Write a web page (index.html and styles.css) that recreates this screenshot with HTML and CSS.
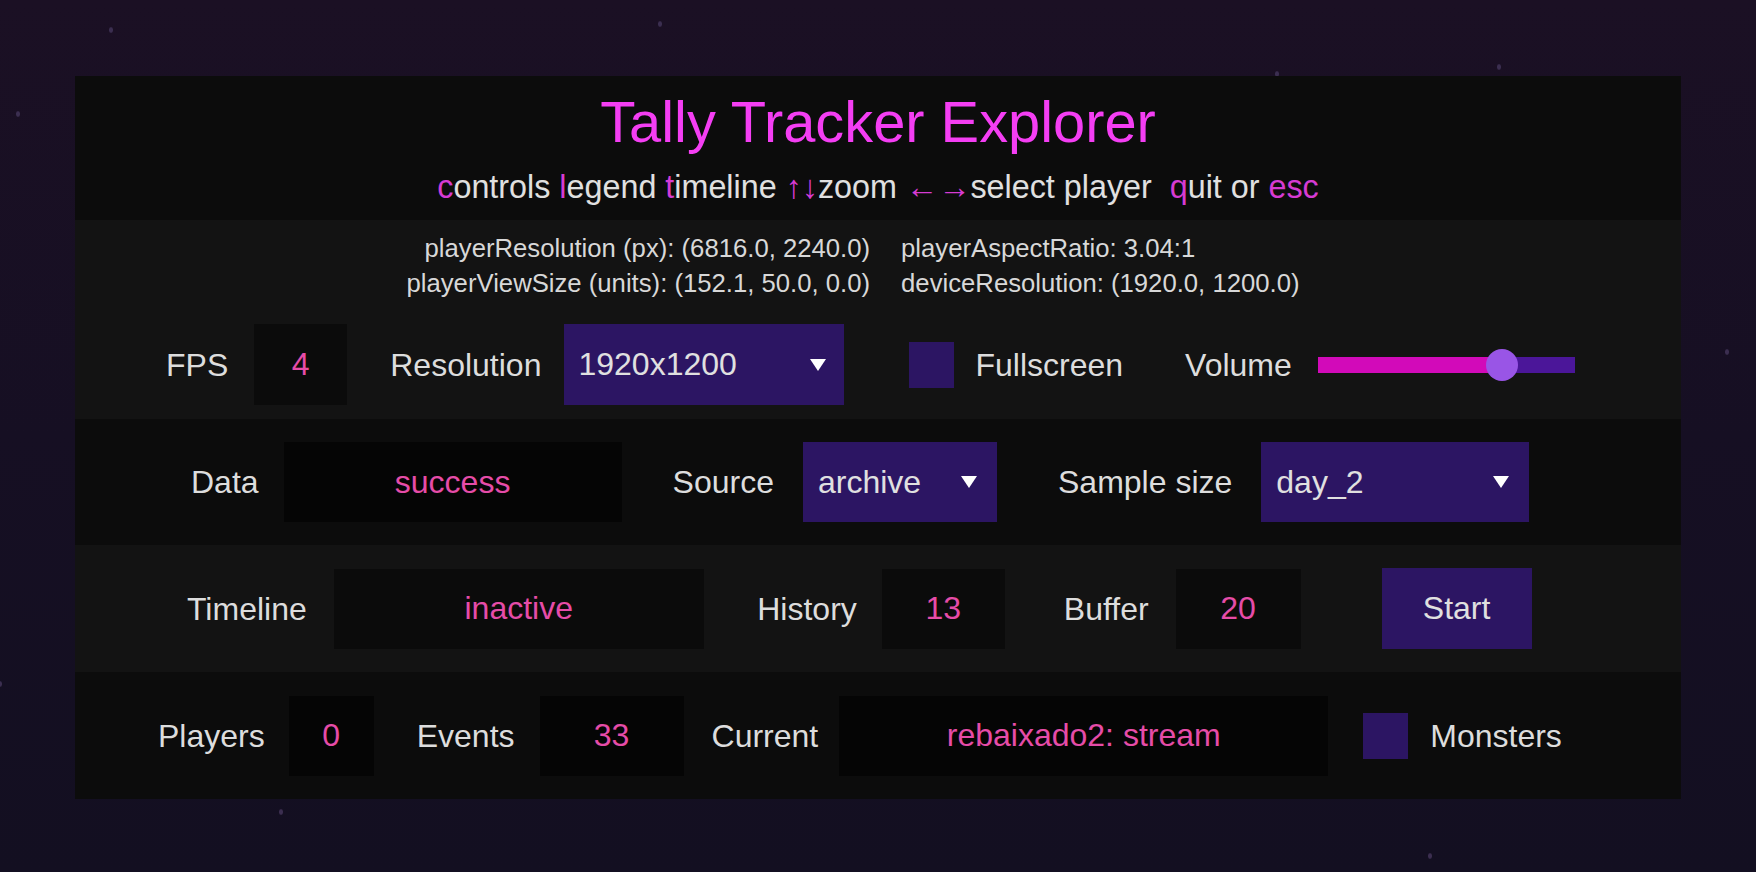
FILE: index.html
```html
<!DOCTYPE html>
<html lang="en">
<head>
<meta charset="utf-8">
<title>Tally Tracker Explorer</title>
<link rel="stylesheet" href="styles.css">
</head>
<body>
<main class="panel">
  <header class="head">
    <h1 class="title">Tally Tracker Explorer</h1>
    <p class="keys"><span class="k">c</span>ontrols <span class="k">l</span>egend <span class="k">t</span>imeline <span class="k">↑↓</span>zoom <span class="k">←→</span>select player&nbsp; <span class="k">q</span>uit or <span class="k">esc</span></p>
  </header>

  <section class="info">
    <div class="info-l">playerResolution (px): (6816.0, 2240.0)</div>
    <div class="info-r">playerAspectRatio: 3.04:1</div>
    <div class="info-l">playerViewSize (units): (152.1, 50.0, 0.0)</div>
    <div class="info-r">deviceResolution: (1920.0, 1200.0)</div>
  </section>

  <div class="row light row-fps">
    <span class="label">FPS</span>
    <div class="val fps-val">4</div>
    <span class="label res-label">Resolution</span>
    <div class="select res-select"><span>1920x1200</span><i class="arrow"></i></div>
    <div class="check full-check"></div>
    <span class="label full-label">Fullscreen</span>
    <span class="label vol-label">Volume</span>
    <div class="slider">
      <div class="fill" style="width:184px"></div>
      <div class="thumb" style="left:168px"></div>
    </div>
  </div>

  <div class="row dark row-data">
    <span class="label">Data</span>
    <div class="val data-val">success</div>
    <span class="label src-label">Source</span>
    <div class="select src-select"><span>archive</span><i class="arrow"></i></div>
    <span class="label sample-label">Sample size</span>
    <div class="select sample-select"><span>day_2</span><i class="arrow"></i></div>
  </div>

  <div class="row light row-time">
    <span class="label">Timeline</span>
    <div class="val time-val">inactive</div>
    <span class="label hist-label">History</span>
    <div class="val hist-val">13</div>
    <span class="label buf-label">Buffer</span>
    <div class="val buf-val">20</div>
    <button class="start">Start</button>
  </div>

  <div class="row dark row-play">
    <span class="label">Players</span>
    <div class="val play-val">0</div>
    <span class="label ev-label">Events</span>
    <div class="val ev-val">33</div>
    <span class="label cur-label">Current</span>
    <div class="val cur-val">rebaixado2: stream</div>
    <div class="check mon-check"></div>
    <span class="label mon-label">Monsters</span>
  </div>
</main>
</body>
</html>
```
FILE: styles.css
```css
html {
  background: #160f22;
}

body {
  margin: 0;
  height: 872px;
  box-sizing: border-box;
  padding: 76px 75px 0;
  font-family: "Liberation Sans", Arial, sans-serif;
  color: #dddddd;
  background:
    radial-gradient(2.5px 3.5px at 111px 30px, #3b2e50 60%, transparent 100%),
    radial-gradient(2.5px 3.5px at 660px 24px, #3b2e50 60%, transparent 100%),
    radial-gradient(2.5px 3.5px at 18px 114px, #3b2e50 60%, transparent 100%),
    radial-gradient(2.5px 3.5px at 1277px 74px, #3b2e50 60%, transparent 100%),
    radial-gradient(2.5px 3.5px at 1499px 67px, #3b2e50 60%, transparent 100%),
    radial-gradient(2.5px 3.5px at 1727px 352px, #3b2e50 60%, transparent 100%),
    radial-gradient(2.5px 3.5px at 0px 684px, #3b2e50 60%, transparent 100%),
    radial-gradient(2.5px 3.5px at 281px 812px, #3b2e50 60%, transparent 100%),
    radial-gradient(2.5px 3.5px at 1430px 856px, #3b2e50 60%, transparent 100%),
    linear-gradient(180deg, #1b1024 0%, #160f23 50%, #130f21 100%);
}

.panel {
  background: #0c0c0c;
}

/* header */
.head {
  padding: 13px 0;
  text-align: center;
  background: #0c0c0c;
}

.title {
  margin: 0;
  font-size: 57.8px;
  line-height: 66px;
  font-weight: 400;
  color: #f43ef3;
}

.keys {
  margin: 12px 0 0;
  font-size: 32.3px;
  line-height: 40px;
  color: #e0e0e0;
  white-space: nowrap;
}

.k {
  color: #d63bd3;
}

/* info block */
.info {
  display: grid;
  grid-template-columns: auto auto;
  column-gap: 31px;
  justify-content: center;
  padding: 11px 50px 0 0;
  background: #131313;
  font-size: 25.7px;
  line-height: 35px;
  color: #d8d8d8;
  white-space: nowrap;
}

.info-l {
  text-align: right;
}

/* rows */
.row {
  display: flex;
  align-items: center;
  box-sizing: border-box;
  height: 127px;
  font-size: 32px;
  white-space: nowrap;
}

.light {
  background: #131313;
}

.dark {
  background: #0c0c0c;
}

.row-fps {
  height: auto;
  padding: 23px 0 14px 91px;
}

.row-data {
  height: 126px;
  padding-left: 116px;
}

.row-time {
  padding-left: 112px;
}

.row-play {
  padding-left: 83px;
}

.label {
  color: #dddddd;
  line-height: 40px;
}

.val {
  display: flex;
  align-items: center;
  justify-content: center;
  height: 80px;
  color: #e64ca8;
  background: #0b0b0b;
}

.dark .val {
  background: #050505;
}

.select {
  display: flex;
  align-items: center;
  justify-content: space-between;
  box-sizing: border-box;
  height: 80px;
  padding: 0 19px 0 15px;
  background: #2c1563;
  color: #e0e0e0;
}

.arrow {
  width: 0;
  height: 0;
  border-left: 8px solid transparent;
  border-right: 8px solid transparent;
  border-top: 12px solid #ffffff;
}

.check {
  width: 45px;
  height: 46px;
  background: #2c1563;
}

/* FPS row */
.fps-val {
  width: 93px;
  height: 81px;
  margin-left: 26px;
}

.res-label {
  margin-left: 43px;
}

.res-select {
  width: 280px;
  height: 81px;
  margin-left: 23px;
  padding-left: 14px;
  padding-right: 18px;
}

.full-check {
  margin-left: 65px;
}

.full-label {
  margin-left: 21px;
}

.vol-label {
  margin-left: 62px;
}

.slider {
  position: relative;
  width: 257px;
  height: 16px;
  margin-left: 26px;
  background: #4b1699;
}

.fill {
  height: 16px;
  background: #d20ab9;
}

.thumb {
  position: absolute;
  top: -8px;
  width: 32px;
  height: 32px;
  border-radius: 50%;
  background: #9955e6;
}

/* Data row */
.data-val {
  width: 338px;
  margin-left: 25px;
}

.src-label {
  margin-left: 51px;
}

.src-select {
  width: 194px;
  margin-left: 29px;
  padding-right: 20px;
}

.sample-label {
  margin-left: 61px;
}

.sample-select {
  width: 268px;
  margin-left: 29px;
  padding-right: 20px;
}

/* Timeline row */
.time-val {
  width: 370px;
  margin-left: 27px;
}

.hist-label {
  margin-left: 53.5px;
}

.hist-val {
  width: 123px;
  margin-left: 25px;
}

.buf-label {
  margin-left: 59px;
}

.buf-val {
  width: 125px;
  margin-left: 27px;
}

.start {
  width: 150px;
  height: 81px;
  margin-left: 81px;
  border: 0;
  padding: 0;
  background: #2c1563;
  color: #e0e0e0;
  font-family: inherit;
  font-size: 32px;
}

/* Players row */
.play-val {
  width: 85px;
  margin-left: 24px;
}

.ev-label {
  margin-left: 43px;
}

.ev-val {
  width: 144px;
  margin-left: 25px;
}

.cur-label {
  margin-left: 28px;
}

.cur-val {
  width: 489px;
  margin-left: 21px;
}

.mon-check {
  margin-left: 35px;
}

.mon-label {
  margin-left: 22px;
}
```
